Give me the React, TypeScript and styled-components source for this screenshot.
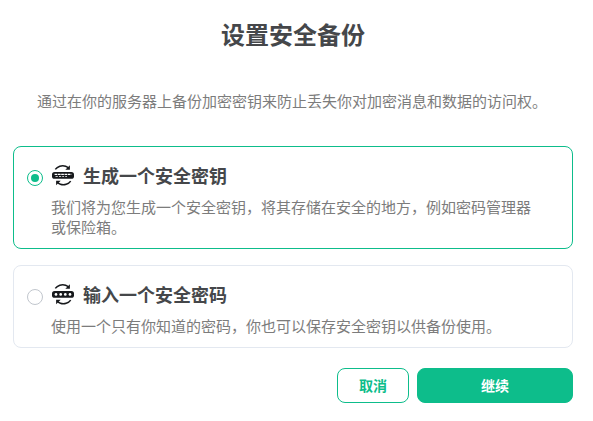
import React, { useState } from "react";
import styled, { createGlobalStyle } from "styled-components";

const GlobalStyle = createGlobalStyle`
  * { box-sizing: border-box; }
  body {
    margin: 0;
    background: #fff;
    font-family: "Noto Sans CJK SC", sans-serif;
    color: #7c7c7c;
  }
`;

const Dialog = styled.main`
  width: 593px;
  height: 421px;
  padding: 16px 20px 0 13px;
  overflow: hidden;
`;

const Title = styled.h1`
  margin: 0;
  font-size: 24px;
  line-height: 36px;
  font-weight: 700;
  text-align: center;
  color: #45474a;
`;

const Intro = styled.p`
  margin: 39px 0 0 24px;
  font-size: 15px;
  line-height: 20px;
  white-space: nowrap;
`;

const Options = styled.div`
  display: flex;
  flex-direction: column;
  gap: 16px;
  margin-top: 35px;
`;

const OptionCard = styled.label<{ $selected: boolean; $height: number }>`
  display: grid;
  grid-template-columns: 16px 1fr;
  column-gap: 8px;
  height: ${(p) => p.$height}px;
  padding: 16px 36px 0 13px;
  border: 1px solid ${(p) => (p.$selected ? "#0dbd8b" : "#e3e8f0")};
  border-radius: 8px;
  cursor: pointer;
`;

const Radio = styled.input`
  appearance: none;
  width: 16px;
  height: 16px;
  margin: 7px 0 0;
  display: grid;
  place-items: center;
  border: 1px solid #c1c6cd;
  border-radius: 50%;

  &:checked {
    border-color: #0dbd8b;
  }
  &:checked::before {
    content: "";
    width: 8px;
    height: 8px;
    border-radius: 50%;
    background: #0dbd8b;
  }
`;

const OptionTitle = styled.div`
  display: flex;
  align-items: center;
  gap: 8px;
  height: 24px;
  font-size: 18px;
  line-height: 24px;
  font-weight: 700;
  color: #45474a;
`;

const Icon = styled.svg`
  width: 24px;
  height: 24px;
  flex: none;
`;

const Description = styled.div`
  margin-top: 10px;
  font-size: 15px;
  line-height: 20px;
`;

const Actions = styled.div`
  display: flex;
  justify-content: flex-end;
  gap: 8px;
  margin-top: 20px;
`;

const Button = styled.button<{ $primary?: boolean }>`
  width: ${(p) => (p.$primary ? 156 : 72)}px;
  height: 35px;
  padding: 0 0 2px;
  border: 1px solid #0dbd8b;
  border-radius: 8px;
  background: ${(p) => (p.$primary ? "#0dbd8b" : "#fff")};
  color: ${(p) => (p.$primary ? "#fff" : "#0dbd8b")};
  font: 700 14px/20px "Noto Sans CJK SC", sans-serif;
`;

function BackupIcon({ kind }: { kind: "key" | "phrase" }) {
  return (
    <Icon viewBox="0 0 24 24" fill="none">
      <path d="M4.3 6.4C6.4 3.4 10.8 1.9 14.6 3.2C16 3.7 17 4.4 17.9 5.4" stroke="#17191c" strokeWidth="1.5" />
      <path d="M18.9 2.2V6.8H14.3Z" fill="#17191c" />
      <path d="M19.7 18.1C17.6 21.1 13.2 22.6 9.4 21.3C8 20.8 7 20.1 6.1 19.1" stroke="#17191c" strokeWidth="1.5" />
      <path d="M5.1 22.3V17.7H9.7Z" fill="#17191c" />
      <rect x="1" y="9" width="22" height="6.8" rx="2.6" fill="#17191c" />
      {kind === "phrase" ? (
        <g fill="#fff">
          {[5, 9.7, 14.3, 19].map((x) => (
            <circle key={x} cx={x} cy="12.4" r="1.35" />
          ))}
        </g>
      ) : (
        <g stroke="#fff" strokeWidth="1.1">
          <path d="M3.6 11.4H20.4" strokeDasharray="2.7 .6" />
          <path d="M4.5 13.5H6.8M8 13.5H10.2M11.2 13.5H13.1M14.2 13.5H16" strokeOpacity=".75" />
        </g>
      )}
    </Icon>
  );
}

const options = [
  {
    id: "key" as const,
    title: "生成一个安全密钥",
    text: "我们将为您生成一个安全密钥，将其存储在安全的地方，例如密码管理器或保险箱。",
    height: 103,
  },
  {
    id: "phrase" as const,
    title: "输入一个安全密码",
    text: "使用一个只有你知道的密码，你也可以保存安全密钥以供备份使用。",
    height: 83,
  },
];

export default function App() {
  const [selected, setSelected] = useState("key");
  return (
    <>
      <GlobalStyle />
      <Dialog>
        <Title>设置安全备份</Title>
        <Intro>通过在你的服务器上备份加密密钥来防止丢失你对加密消息和数据的访问权。</Intro>
        <Options>
          {options.map((o) => (
            <OptionCard key={o.id} $selected={selected === o.id} $height={o.height}>
              <Radio
                type="radio"
                name="backup"
                checked={selected === o.id}
                onChange={() => setSelected(o.id)}
              />
              <div>
                <OptionTitle>
                  <BackupIcon kind={o.id} />
                  {o.title}
                </OptionTitle>
                <Description>{o.text}</Description>
              </div>
            </OptionCard>
          ))}
        </Options>
        <Actions>
          <Button>取消</Button>
          <Button $primary>继续</Button>
        </Actions>
      </Dialog>
    </>
  );
}
